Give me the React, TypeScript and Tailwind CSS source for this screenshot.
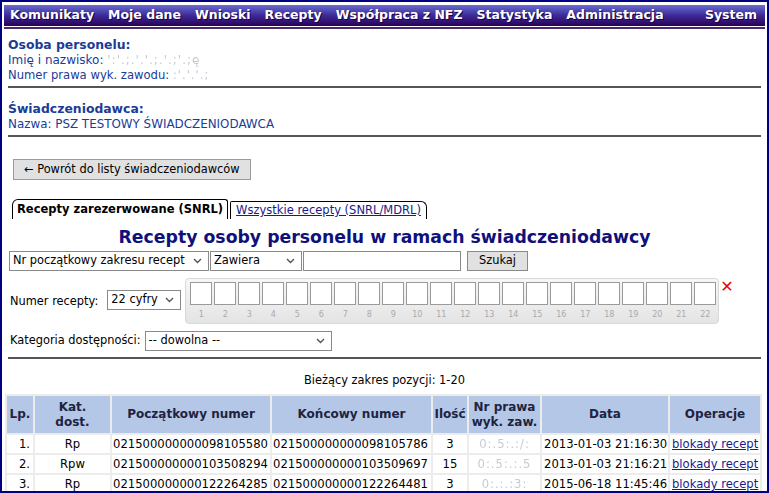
import React from 'react';

const menu = ['Komunikaty', 'Moje dane', 'Wnioski', 'Recepty', 'Współpraca z NFZ', 'Statystyka', 'Administracja'];

const rows = [
  { lp: '1.', kat: 'Rp', start: '021500000000098105580', end: '021500000000098105786', qty: '3', nr: '0:.5:.:/:', date: '2013-01-03 21:16:30' },
  { lp: '2.', kat: 'Rpw', start: '021500000000103508294', end: '021500000000103509697', qty: '15', nr: '0:.5:.:.5', date: '2013-01-03 21:16:21' },
  { lp: '3.', kat: 'Rp', start: '021500000000122264285', end: '021500000000122264481', qty: '3', nr: '0:.:.:3:', date: '2015-06-18 11:45:46' },
];

function Blurred({ text }: { text: string }) {
  return <span className="text-[#c4cad6] blur-[0.7px] tracking-[1px]">{text}</span>;
}

function Select({ label, width }: { label: string; width: string }) {
  return (
    <div className={`flex items-center justify-between h-[20px] border border-[#8a8a8a] bg-white pl-[3px] pr-[6px] text-[11.4px] text-black ${width}`}>
      <span className="whitespace-nowrap">{label}</span>
      <svg width="9" height="6" viewBox="0 0 9 6"><path d="M1 1 L4.5 4.5 L8 1" stroke="#555" strokeWidth="1.4" fill="none" /></svg>
    </div>
  );
}

export default function App() {
  const digits = Array.from({ length: 22 }, (_, i) => i + 1);

  return (
    <div className="w-[769px] h-[493px] overflow-hidden bg-white border-2 border-[#000080] font-['DejaVu_Sans',Verdana,sans-serif] text-[11.4px]">
      {/* top menu */}
      <div className="mx-[2px] mt-[3px] border-b-[2px] border-[#4a2a6a] pb-[1px] bg-white">
        <div className="flex items-center h-[21px] pl-[6px] pr-[8px] bg-gradient-to-b from-[#6b6bd0] via-[#3c2a98] to-[#2a0058] text-white font-bold text-[12.5px] [text-shadow:1px_1px_0_#1a0040]">
          {menu.map((m) => (
            <span key={m} className="mr-[14px] whitespace-nowrap">{m}</span>
          ))}
          <span className="ml-auto">System</span>
        </div>
      </div>

      <div className="px-[6px]">
        {/* personel */}
        <div className="pt-[7px] pb-[3px] border-b-2 border-[#555] text-[#1a3c96]">
          <div className="font-bold text-[12.4px] leading-[17px]">Osoba personelu:</div>
          <div className="leading-[15px] text-[12px]">Imię i nazwisko: <Blurred text="':'.;.'.'.;.'.;'.;ę" /></div>
          <div className="leading-[15px] text-[11.6px]">Numer prawa wyk. zawodu: <Blurred text=":'.'.'.;" /></div>
        </div>

        <div className="pt-[12px] pb-[3px] border-b-2 border-[#555] text-[#1a3c96]">
          <div className="font-bold text-[12.4px] leading-[17px]">Świadczeniodawca:</div>
          <div className="leading-[15px] text-[11.9px]">Nazwa: PSZ TESTOWY ŚWIADCZENIODAWCA</div>
        </div>

        <div className="pt-[22px] pl-[5px]">
          <button className="h-[21px] w-[238px] bg-[#e1e1e1] border border-[#9a9a9a] text-[11.4px] text-black text-left pl-[10px] whitespace-nowrap">← Powrót do listy świadczeniodawców</button>
        </div>

        {/* tabs */}
        <div className="flex items-end pl-[4px] h-[39px] text-[11.5px]">
          <div className="h-[20px] px-[4px] border-t border-l border-r border-black rounded-tl-[6px] rounded-tr-[3px] font-bold text-black leading-[19px] whitespace-nowrap">Recepty zarezerwowane (SNRL)</div>
          <div className="ml-[2px] h-[18px] px-[5px] border-t border-l border-r border-black rounded-tr-[6px] rounded-tl-[2px] text-[#1a1a8a] underline leading-[17px] whitespace-nowrap">Wszystkie recepty (SNRL/MDRL)</div>
        </div>

        <h1 className="text-center font-bold text-[17.3px] text-[#10107a] leading-[21px] mt-[8px]">Recepty osoby personelu w ramach świadczeniodawcy</h1>

        {/* search row */}
        <div className="flex items-center mt-[3px] ml-[1px]">
          <Select label="Nr początkowy zakresu recept" width="w-[200px]" />
          <Select label="Zawiera" width="w-[92px] ml-[1px]" />
          <div className="ml-[1px] h-[20px] w-[158px] border border-[#8a8a8a] bg-white" />
          <button className="ml-[6px] h-[20px] w-[61px] bg-[#e1e1e1] border border-[#8a8a8a] text-[11.4px] text-black">Szukaj</button>
        </div>

        {/* numer recepty */}
        <div className="flex items-start mt-[7px] ml-[2px]">
          <span className="mt-[15px] text-black">Numer recepty:</span>
          <div className="ml-[9px] mt-[12px]"><Select label="22 cyfry" width="w-[74px]" /></div>
          <div className="ml-[4px] flex border border-[#d8d8d8] rounded-[4px] bg-gradient-to-b from-[#f7f7f7] to-[#e4e4e4] pl-[4px] pr-[2px] pt-[3px] pb-[2px] gap-[2px]">
            {digits.map((d) => (
              <div key={d} className="flex flex-col items-center w-[22px]">
                <div className="w-[22px] h-[23px] border border-[#9a9a9a] bg-white" />
                <span className="text-[8px] text-[#aaaaaa] leading-[10px] mt-[5px] mb-[1px]">{d}</span>
              </div>
            ))}
          </div>
          <span className="ml-[1px] text-[#ee0000] text-[16px] leading-[17px] font-bold">✕</span>
        </div>

        {/* kategoria */}
        <div className="flex items-center mt-[7px] pb-[6px] border-b-2 border-[#555]">
          <span className="ml-[2px] text-black">Kategoria dostępności:</span>
          <div className="ml-[4px]"><Select label="-- dowolna --" width="w-[187px]" /></div>
        </div>

        <div className="text-center text-black mt-[13px] leading-[16px]">Bieżący zakres pozycji: 1-20</div>

        {/* table */}
        <table className="mt-[6px] ml-[-3px] border-separate border-spacing-[2px] bg-[#ececec] table-fixed w-[757px] text-black text-[11.6px]">
          <colgroup>
            <col className="w-[26px]" />
            <col className="w-[75px]" />
            <col className="w-[158px]" />
            <col className="w-[159px]" />
            <col className="w-[34px]" />
            <col className="w-[71px]" />
            <col className="w-[126px]" />
            <col />
          </colgroup>
          <thead>
            <tr className="bg-[#b4c7e7] font-bold text-[#1e2440] h-[37px] leading-[15px] text-[12px]">
              <th>Lp.</th>
              <th>Kat.<br />dost.</th>
              <th>Początkowy numer</th>
              <th>Końcowy numer</th>
              <th>Ilość</th>
              <th>Nr prawa<br />wyk. zaw.</th>
              <th>Data</th>
              <th>Operacje</th>
            </tr>
          </thead>
          <tbody>
            {rows.map((r) => (
              <tr key={r.lp} className="bg-white h-[18px] leading-[18px]">
                <td className="text-right pr-[3px]">{r.lp}</td>
                <td className="text-center">{r.kat}</td>
                <td className="pl-[1px] whitespace-nowrap">{r.start}</td>
                <td className="pl-[1px] whitespace-nowrap">{r.end}</td>
                <td className="text-center">{r.qty}</td>
                <td className="text-center"><Blurred text={r.nr} /></td>
                <td className="pl-[2px] whitespace-nowrap">{r.date}</td>
                <td className="pl-[2px] whitespace-nowrap"><a className="text-[#1a1a8a] underline">blokady recept</a></td>
              </tr>
            ))}
          </tbody>
        </table>
      </div>
    </div>
  );
}
